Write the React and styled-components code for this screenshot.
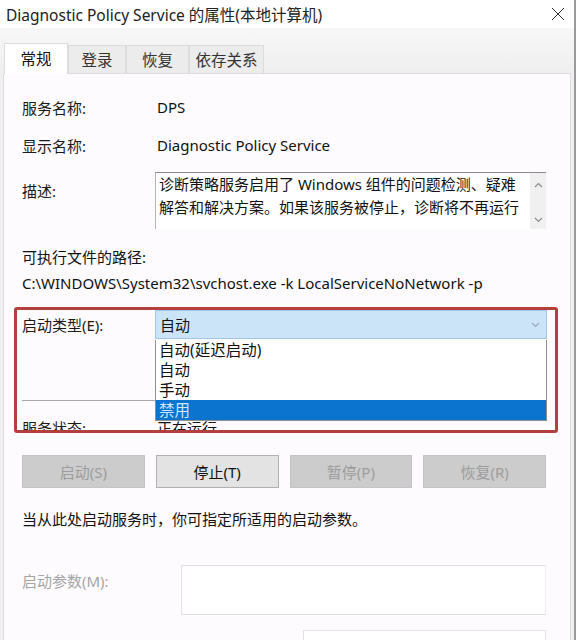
import React from "react";
import styled, { createGlobalStyle } from "styled-components";

const GlobalStyle = createGlobalStyle`
  html, body {
    margin: 0;
    padding: 0;
    background: #f0f0f0;
  }
  body {
    font-family: "Noto Sans", "Noto Sans CJK SC", sans-serif;
    color: #111;
  }
`;

const Window = styled.div`
  width: 576px;
  height: 640px;
  display: flex;
  flex-direction: column;
  background: #f0f0f0;
  border-right: 2px solid #9a9a9a;
  box-sizing: border-box;
  overflow: hidden;
`;

const TitleBar = styled.div`
  height: 28px;
  display: flex;
  align-items: center;
  justify-content: space-between;
  padding: 0 6px 0 6px;
  background: #fff;
  font-size: 15.5px;
  color: #222;
  flex-shrink: 0;
`;

const CloseBtn = styled.div`
  width: 20px;
  height: 20px;
  display: flex;
  align-items: center;
  justify-content: center;
`;

const TabStrip = styled.div`
  display: flex;
  align-items: flex-end;
  height: 45px;
  padding-left: 4px;
  flex-shrink: 0;
  background: linear-gradient(#f7f7f7, #efefef);
`;

const Tab = styled.div`
  height: ${(p) => (p.$active ? "31px" : "28px")};
  width: ${(p) => p.$w}px;
  display: flex;
  align-items: center;
  justify-content: center;
  font-size: 15.5px;
  color: ${(p) => (p.$active ? "#111" : "#333")};
  background: ${(p) => (p.$active ? "#fff" : "#ececec")};
  border: 1px solid #dcdcdc;
  border-bottom: none;
  margin-bottom: ${(p) => (p.$active ? "-1px" : "0")};
  position: relative;
  z-index: ${(p) => (p.$active ? 2 : 1)};
  box-sizing: border-box;
  padding-bottom: ${(p) => (p.$active ? "2px" : "0")};
`;

const Panel = styled.div`
  flex: 1;
  margin: 0 3px 0 3px;
  background: #fdfbfd;
  border: 1px solid #dcdcdc;
  border-bottom: none;
  padding: 21px 24px 0 18px;
  display: flex;
  flex-direction: column;
`;

const Row = styled.div`
  display: flex;
  align-items: ${(p) => (p.$top ? "flex-start" : "center")};
  min-height: 24px;
  margin-top: ${(p) => p.$mt || 0}px;
  font-size: 15px;
`;

const Label = styled.div`
  width: 133px;
  flex-shrink: 0;
  color: ${(p) => (p.$muted ? "#a6a6a6" : "#1a1a1a")};
  padding-top: ${(p) => p.$pt || 0}px;
`;

const Value = styled.div`
  padding-left: 2px;
  color: #111;
`;

const DescBox = styled.div`
  flex: 1;
  height: 56px;
  display: flex;
  border-top: 1px solid #8a8a8a;
  border-left: 1px solid #b5b5b5;
  background: #fff;
`;

const DescText = styled.div`
  flex: 1;
  padding: 0 0 0 3px;
  line-height: 23px;
  font-size: 15px;
  white-space: nowrap;
  color: #111;
`;

const ScrollCol = styled.div`
  width: 16px;
  background: #f0f0f0;
  display: flex;
  flex-direction: column;
  justify-content: space-between;
  align-items: center;
  padding: 9px 0 6px;
`;

const TextLine = styled.div`
  font-size: 15px;
  line-height: 24px;
  margin-top: ${(p) => p.$mt || 0}px;
  color: ${(p) => (p.$muted ? "#a6a6a6" : "#111")};
  white-space: nowrap;
`;

const RedBox = styled.div`
  margin: 12px -12px 0 -8px;
  height: 126px;
  flex-shrink: 0;
  border: 3px solid #b4403e;
  border-radius: 3px;
  box-sizing: border-box;
  padding: 0 8px 0 5px;
  overflow: hidden;
  display: flex;
  flex-direction: column;
`;

const ComboRow = styled.div`
  display: flex;
  align-items: center;
  height: 29px;
  flex-shrink: 0;
  font-size: 15px;
`;

const ComboWrap = styled.div`
  flex: 1;
  position: relative;
  height: 29px;
`;

const Combo = styled.div`
  height: 29px;
  box-sizing: border-box;
  background: #cce4f7;
  border: 1px solid #9fc5e8;
  display: flex;
  align-items: center;
  justify-content: space-between;
  padding: 0 6px 0 4px;
  font-size: 15px;
`;

const DropList = styled.div`
  position: absolute;
  top: 30px;
  left: 0;
  right: 0;
  background: #fff;
  border: 1px solid #8f8f8f;
  border-top: none;
  z-index: 3;
`;

const DropItem = styled.div`
  height: 20px;
  line-height: 20px;
  padding-left: 3px;
  font-size: 15.5px;
  background: ${(p) => (p.$sel ? "#0a74cf" : "transparent")};
  color: ${(p) => (p.$sel ? "#cfe6ff" : "#111")};
`;

const Separator = styled.div`
  margin-top: 61px;
  width: 134px;
  flex-shrink: 0;
  border-top: 1px solid #a8a8a8;
`;

const StatusRow = styled.div`
  display: flex;
  flex-shrink: 0;
  margin-top: 17px;
  font-size: 15px;
  line-height: 20px;
`;

const ButtonRow = styled.div`
  display: grid;
  grid-template-columns: repeat(4, 1fr);
  column-gap: 11px;
  margin-top: 22px;
`;

const Btn = styled.div`
  height: 33px;
  box-sizing: border-box;
  display: flex;
  align-items: center;
  justify-content: center;
  font-size: 15px;
  background: ${(p) => (p.$disabled ? "#cccccc" : "#e3e3e3")};
  border: 1px solid ${(p) => (p.$disabled ? "#c4c4c4" : "#b0b0b0")};
  color: ${(p) => (p.$disabled ? "#9d9d9d" : "#111")};
`;

const ParamRow = styled.div`
  display: flex;
  align-items: flex-start;
  margin-top: 34px;
  font-size: 15px;
`;

const ParamInput = styled.div`
  margin-left: 26px;
  flex: 1;
  height: 48px;
  border: 1px solid #e2e2e2;
  border-right-color: #efefef;
  background: #fff;
`;

const BottomBox = styled.div`
  margin: 15px 0 0 281px;
  height: 20px;
  border: 1px solid #e2e2e2;
  border-bottom: none;
  background: #fff;
`;

const Chevron = ({ up, color = "#8a8a8a" }) => (
  <svg width="9" height="6" viewBox="0 0 9 6">
    <path
      d={up ? "M1 5 L4.5 1.5 L8 5" : "M1 1 L4.5 4.5 L8 1"}
      fill="none"
      stroke={color}
      strokeWidth="1.1"
    />
  </svg>
);

const App = () => {
  return (
    <>
      <GlobalStyle />
      <Window>
        <TitleBar>
          <span>Diagnostic Policy Service 的属性(本地计算机)</span>
          <CloseBtn>
            <svg width="14" height="14" viewBox="0 0 14 14">
              <path d="M1 1 L13 13 M13 1 L1 13" stroke="#333" strokeWidth="1" />
            </svg>
          </CloseBtn>
        </TitleBar>
        <TabStrip>
          <Tab $active $w={64}>常规</Tab>
          <Tab $w={58}>登录</Tab>
          <Tab $w={63}>恢复</Tab>
          <Tab $w={75}>依存关系</Tab>
        </TabStrip>
        <Panel>
          <Row>
            <Label>服务名称:</Label>
            <Value>DPS</Value>
          </Row>
          <Row $mt={14}>
            <Label>显示名称:</Label>
            <Value>Diagnostic Policy Service</Value>
          </Row>
          <Row $top $mt={15}>
            <Label $pt={8}>描述:</Label>
            <DescBox>
              <DescText>
                <div>诊断策略服务启用了 Windows 组件的问题检测、疑难</div>
                <div>解答和解决方案。如果该服务被停止，诊断将不再运行</div>
              </DescText>
              <ScrollCol>
                <Chevron up />
                <Chevron />
              </ScrollCol>
            </DescBox>
          </Row>
          <TextLine $mt={16}>可执行文件的路径:</TextLine>
          <TextLine $mt={2}>C:\WINDOWS\System32\svchost.exe -k LocalServiceNoNetwork -p</TextLine>
          <RedBox>
            <ComboRow>
              <Label>启动类型(E):</Label>
              <ComboWrap>
                <Combo>
                  <span>自动</span>
                  <Chevron color="#9aa6b2" />
                </Combo>
                <DropList>
                  <DropItem>自动(延迟启动)</DropItem>
                  <DropItem>自动</DropItem>
                  <DropItem>手动</DropItem>
                  <DropItem $sel>禁用</DropItem>
                </DropList>
              </ComboWrap>
            </ComboRow>
            <Separator />
            <StatusRow>
              <Label>服务状态:</Label>
              <Value>正在运行</Value>
            </StatusRow>
          </RedBox>
          <ButtonRow>
            <Btn $disabled>启动(S)</Btn>
            <Btn>停止(T)</Btn>
            <Btn $disabled>暂停(P)</Btn>
            <Btn $disabled>恢复(R)</Btn>
          </ButtonRow>
          <TextLine $mt={19}>当从此处启动服务时，你可指定所适用的启动参数。</TextLine>
          <ParamRow>
            <Label $muted $pt={5}>启动参数(M):</Label>
            <ParamInput />
          </ParamRow>
          <BottomBox />
        </Panel>
      </Window>
    </>
  );
};

export default App;
